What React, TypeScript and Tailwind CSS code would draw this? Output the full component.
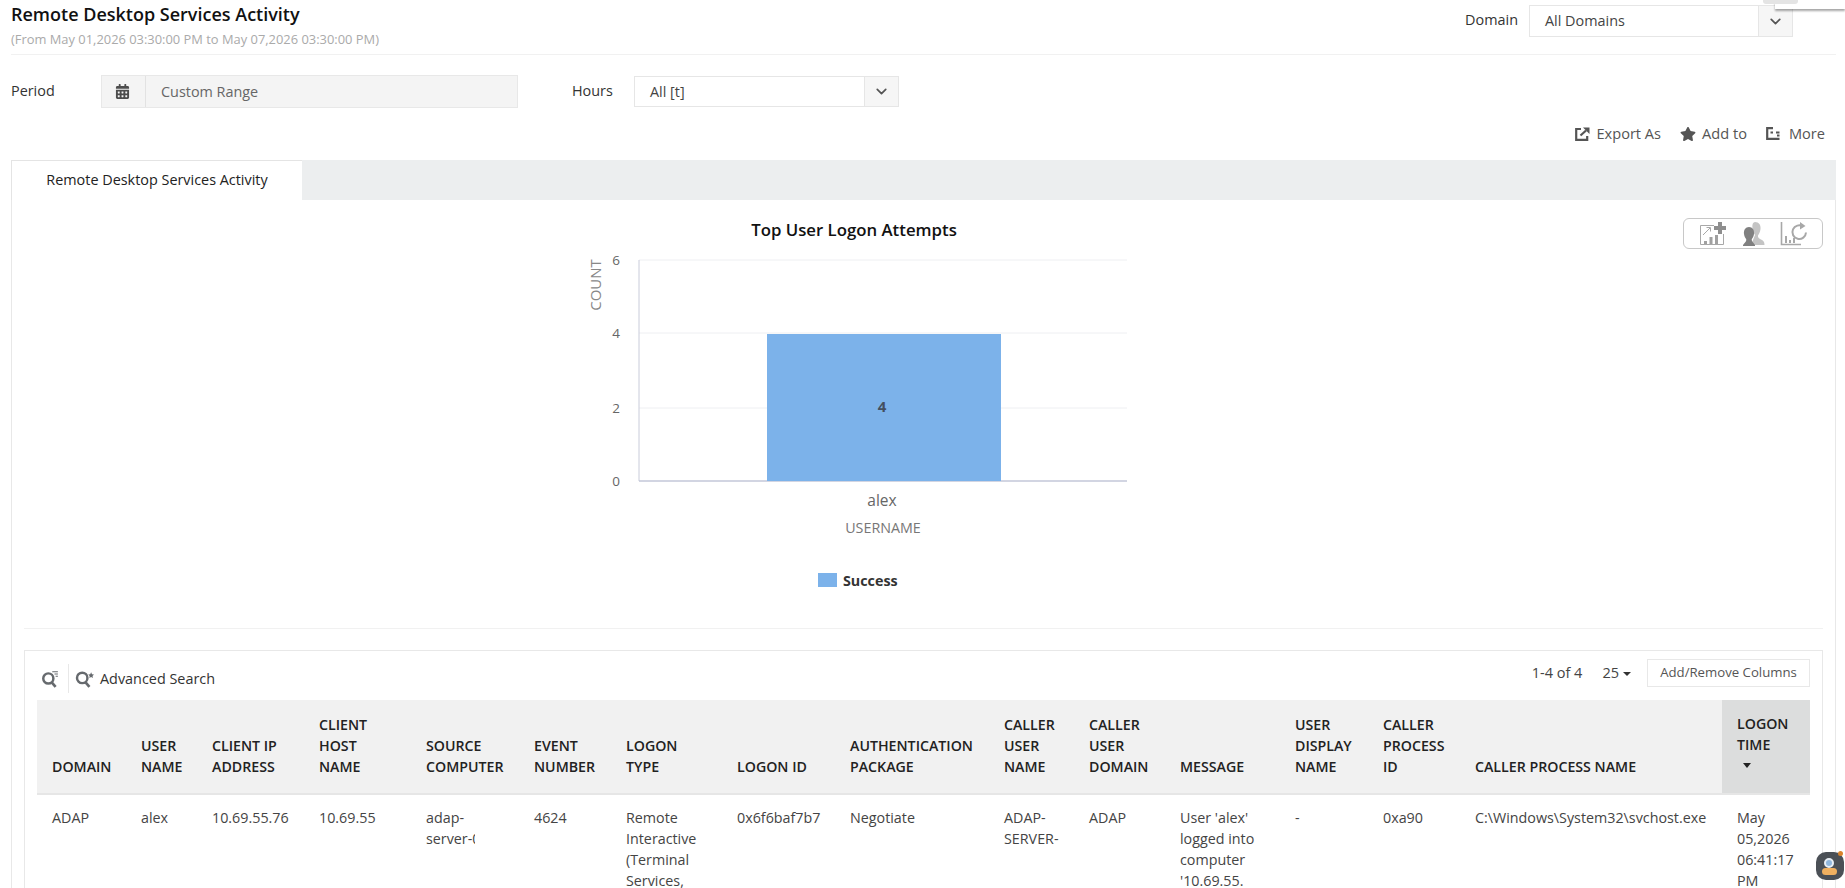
import React from 'react';
import { ChevronDown } from 'lucide-react';
import { FaCalendarAlt, FaStar } from 'react-icons/fa';

const columns = [
  { w: 'w-[89px]', head: ['DOMAIN'], cell: ['ADAP'] },
  { w: 'w-[71px]', head: ['USER', 'NAME'], cell: ['alex'] },
  { w: 'w-[107px]', head: ['CLIENT IP', 'ADDRESS'], cell: ['10.69.55.76'] },
  { w: 'w-[107px]', head: ['CLIENT', 'HOST', 'NAME'], cell: ['10.69.55'] },
  { w: 'w-[108px]', head: ['SOURCE', 'COMPUTER'], cell: ['adap-', 'server-0'], clip: true },
  { w: 'w-[92px]', head: ['EVENT', 'NUMBER'], cell: ['4624'] },
  { w: 'w-[111px]', head: ['LOGON', 'TYPE'], cell: ['Remote', 'Interactive', '(Terminal', 'Services,'] },
  { w: 'w-[113px]', head: ['LOGON ID'], cell: ['0x6f6baf7b7'] },
  { w: 'w-[154px]', head: ['AUTHENTICATION', 'PACKAGE'], cell: ['Negotiate'] },
  { w: 'w-[85px]', head: ['CALLER', 'USER', 'NAME'], cell: ['ADAP-', 'SERVER-'] },
  { w: 'w-[91px]', head: ['CALLER', 'USER', 'DOMAIN'], cell: ['ADAP'] },
  { w: 'w-[115px]', head: ['MESSAGE'], cell: ["User 'alex'", 'logged into', 'computer', "'10.69.55."] },
  { w: 'w-[88px]', head: ['USER', 'DISPLAY', 'NAME'], cell: ['-'] },
  { w: 'w-[92px]', head: ['CALLER', 'PROCESS', 'ID'], cell: ['0xa90'] },
  { w: 'w-[262px]', head: ['CALLER PROCESS NAME'], cell: ['C:\\Windows\\System32\\svchost.exe'] },
];

const ExportIcon = () => (
  <svg width="15" height="14" viewBox="0 0 15 14" fill="none">
    <path d="M6 2H1.200v10.800h11V9" stroke="#555" strokeWidth="2.200" />
    <path d="M5.500 8.500 11 3.500" stroke="#555" strokeWidth="2.200" />
    <path d="M8 0.500h6.500V7z" fill="#555" />
  </svg>
);

const MoreIcon = () => (
  <svg width="14" height="13" viewBox="0 0 14 13" fill="none" stroke="#555" strokeWidth="2.200">
    <path d="M7 1.200H1.200V11.800H13.500" />
    <path d="M4.500 5.500h2.500M10 5.500h3.500M11 8.500h2.500" />
  </svg>
);

const SearchFilterIcon = () => (
  <svg width="18" height="18" viewBox="0 0 16 16" fill="none" stroke="#666a6e">
    <circle cx="6.500" cy="7.500" r="4.500" strokeWidth="2.200" />
    <path d="m9.500 11 3.500 4" strokeWidth="2.400" />
    <path d="M10 1.500h5M12 3.500h3M13 5.500h2" strokeWidth="1" />
  </svg>
);

const SearchStarIcon = () => (
  <svg width="20" height="18" viewBox="0 0 18 16">
    <g fill="none" stroke="#666a6e">
      <circle cx="6.500" cy="7" r="4.700" strokeWidth="2.200" />
      <path d="m9.500 11 3.500 4" strokeWidth="2.400" />
    </g>
    <path d="m14.500 2 .8 1.700 1.800.2-1.300 1.300.3 1.800-1.600-.9-1.600.9.3-1.800-1.300-1.300 1.800-.2z" fill="#666a6e" />
  </svg>
);

const ChartAddIcon = () => (
  <svg width="27" height="24" viewBox="0 0 27 24" fill="none" className="shrink-0">
    <path d="M15 3.500H1.500v19h23V12" stroke="#a8a8a8" />
    <path d="m4 13 7-7M7.500 5.500H11.500V9.500" stroke="#a8a8a8" />
    <path d="M5 19h3v3H5zM10.500 15h3v7h-3zM16 13h3v9h-3z" fill="#a0a0a0" />
    <path d="M19 0h4v4h4v4h-4v4h-4V8h-4V4h4z" fill="#8e8e8e" />
  </svg>
);

const UsersIcon = () => (
  <svg width="24" height="24" viewBox="0 0 24 24" className="shrink-0">
    <path d="M14 0c4 0 6 3 5.500 7-.3 3-1.500 5-2.500 6.500-.5 2 1 3 4 4.500 1.500.7 2.500 2 2.500 5H10l4-10C11 9 10 0 14 0z" fill="#c4c4c4" />
    <path d="M8 5c3.500 0 5.500 3 5 7-.3 2.500-1.500 4-2.300 5.500 0 1.500 1.500 3 3.300 5.500v1H2v-1c2-2.500 3.500-4 3.300-5.500C4.500 16 3.300 14.500 3 12c-.5-4 1.500-7 5-7z" fill="#808080" />
  </svg>
);

const ChartRefreshIcon = () => (
  <svg width="28" height="24" viewBox="0 0 28 24" fill="none" className="shrink-0">
    <path d="M1.500 0v22.500H21" stroke="#a8a8a8" strokeWidth="1.600" />
    <path d="M5 14h2v7H5zM9 18h2v3H9zM13 16h2v5h-2z" fill="#a8a8a8" />
    <path d="M23 4.500a6.800 6.800 0 1 0 3 6" stroke="#a8a8a8" strokeWidth="2" />
    <path d="M20 0l5.500 4-5.500 3.500z" fill="#a8a8a8" />
  </svg>
);

const SelectBox = ({ label, width, height }: { label: string; width: string; height: string }) => (
  <div className={`flex ${width} ${height} border border-[#e6e6e6] bg-white`}>
    <div className="flex flex-1 items-center pl-[15px] text-[14.400px] text-[#444]">{label}</div>
    <div className="flex w-[34px] items-center justify-center border-l border-[#e6e6e6] bg-[#f6f6f6]">
      <ChevronDown size={17} strokeWidth={2.4} color="#555" />
    </div>
  </div>
);

const Chart = () => (
  <svg width="570" height="405" viewBox="0 0 570 405" className="shrink-0" fontFamily="'Open Sans', sans-serif">
    <text x="286" y="19" textAnchor="middle" fontSize="16.800" fontWeight="600" fill="#111">Top User Logon Attempts</text>
    {[43, 116, 191].map((y) => (
      <line key={y} x1="71" x2="559" y1={y} y2={y} stroke="#eeeff2" />
    ))}
    <line x1="71" x2="71" y1="43" y2="264" stroke="#c9ccda" />
    <line x1="71" x2="559" y1="264" y2="264" stroke="#c3c7d8" strokeWidth="1.500" />
    {[['6', 48], ['4', 121], ['2', 196], ['0', 269]].map(([t, y]) => (
      <text key={t} x="48" y={y} textAnchor="middle" fontSize="13.500" fill="#666">{t}</text>
    ))}
    <text transform="translate(33 68) rotate(-90)" textAnchor="middle" fontSize="15" fill="#888">COUNT</text>
    <rect x="199" y="117" width="234" height="147" fill="#7cb2ea" />
    <text x="314" y="195" textAnchor="middle" fontSize="15" fontWeight="700" fill="#444f60">4</text>
    <text x="314" y="289" textAnchor="middle" fontSize="15.500" fill="#666">alex</text>
    <text x="315" y="316" textAnchor="middle" fontSize="14.300" fill="#777">USERNAME</text>
    <rect x="250" y="356" width="19" height="14" fill="#7cb2ea" />
    <text x="275" y="369" fontSize="14.300" fontWeight="700" fill="#333">Success</text>
  </svg>
);

const App: React.FC = () => {
  return (
    <div className="relative h-[888px] overflow-hidden bg-white font-['Open_Sans',sans-serif] text-[#333]">
      {/* Top bar */}
      <div className="mr-[9px] ml-[11px] flex h-[55px] justify-between border-b border-[#f1f1f1]">
        <div>
          <h1 className="mt-[2px] text-[18px] leading-[24px] font-semibold text-[#111]">Remote Desktop Services Activity</h1>
          <p className="mt-[3px] text-[12.900px] leading-[20px] text-[#aaa]">(From May 01,2026 03:30:00 PM to May 07,2026 03:30:00 PM)</p>
        </div>
        <div className="mt-[5px] mr-[43px] flex items-start">
          <span className="mt-[4px] mr-[11px] text-[14.400px] text-[#333]">Domain</span>
          <SelectBox label="All Domains" width="w-[264px]" height="h-[32px]" />
        </div>
      </div>

      {/* Filters */}
      <div className="mt-[20px] flex items-center pl-[11px] text-[14.400px]">
        <span className="w-[90px] pb-[2px]">Period</span>
        <div className="flex h-[33px] w-[417px] border border-[#e8e8e8] bg-[#f4f4f4]">
          <div className="flex w-[44px] items-center justify-center border-r border-[#e2e2e2] pr-[2px]">
            <FaCalendarAlt size={15} color="#4d4d4d" />
          </div>
          <div className="flex items-center pl-[15px] text-[#666]">Custom Range</div>
        </div>
        <span className="ml-[54px] w-[62px] pb-[2px]">Hours</span>
        <SelectBox label="All [t]" width="w-[265px]" height="h-[31px]" />
      </div>

      {/* Actions */}
      <div className="mt-[15px] flex h-[22px] items-center justify-end gap-[19px] pr-[20px] text-[14.600px] text-[#555]">
        <div className="flex items-center gap-[6px]"><ExportIcon />Export As</div>
        <div className="flex items-center gap-[6px]"><FaStar size={16} color="#555" />Add to</div>
        <div className="flex items-center gap-[9px]"><MoreIcon />More</div>
      </div>

      {/* Tabs */}
      <div className="mt-[15px] mr-[9px] ml-[11px] flex h-[40px] bg-[#eceeef]">
        <div className="flex w-[291px] items-center justify-center border-t border-l border-[#e4e4e4] bg-white pb-[2px] text-[14.400px] text-[#222]">
          Remote Desktop Services Activity
        </div>
      </div>

      {/* Panel */}
      <div className="mr-[9px] ml-[11px] h-[700px] border-x border-[#e8e8e8] px-[12px]">
        <div className="flex items-start border-b border-[#f1f1f1] pt-[17px] pb-[6px]">
          <div className="ml-[544px]"><Chart /></div>
          <div className="mt-[1px] ml-auto flex h-[31px] w-[140px] items-center justify-center gap-[15px] rounded-[6px] border border-[#c8c8c8]">
            <ChartAddIcon />
            <UsersIcon />
            <ChartRefreshIcon />
          </div>
        </div>

        <div className="mt-[21px] border border-[#e8e8e8] px-[12px]">
          <div className="flex h-[49px] items-start">
            <div className="mt-[13px] flex h-[29px] w-[32px] items-center border-r border-[#e8e8e8] pl-[4px]"><SearchFilterIcon /></div>
            <div className="mt-[13px] ml-[6px] flex h-[29px] items-center gap-[5px] text-[14.400px] text-[#333]"><SearchStarIcon />Advanced Search</div>
            <div className="mt-[8px] ml-auto flex items-center text-[14.500px]">
              <span className="text-[#444]">1-4 of 4</span>
              <span className="ml-[20px] flex items-center gap-[4px] text-[#444]">25<span className="mt-[2px] border-x-[4px] border-t-[4px] border-x-transparent border-t-[#333]" /></span>
              <span className="ml-[16px] flex h-[28px] w-[163px] items-center justify-center border border-[#e8e8e8] text-[13.200px] text-[#555]">Add/Remove Columns</span>
            </div>
          </div>
          <table className="w-[1773px] table-fixed border-collapse text-[14.300px] leading-[21px]">
            <colgroup>
              {columns.map((c) => <col key={c.head.join()} className={c.w} />)}
              <col className="w-[88px]" />
            </colgroup>
            <thead>
              <tr className="h-[94px] border-b-[2px] border-[#e6e6e6] bg-[#f1f1f1] text-left align-bottom text-[14.200px] font-semibold text-[#222]">
                {columns.map((c) => (
                  <th key={c.head.join()} className="px-[15px] pb-[16px] font-semibold">
                    {c.head.map((h) => <div key={h} className="whitespace-nowrap">{h}</div>)}
                  </th>
                ))}
                <th className="bg-[#dcdddd] px-[15px] pb-[17px] align-bottom font-semibold">
                  <div>LOGON</div>
                  <div>TIME</div>
                  <div className="flex h-[21px] items-center pl-[6px]">
                    <span className="h-0 w-0 border-x-[4.500px] border-t-[5px] border-x-transparent border-t-[#222]" />
                  </div>
                </th>
              </tr>
            </thead>
            <tbody>
              <tr className="align-top text-[#444]">
                {columns.map((c) => (
                  <td key={c.head.join()} className="px-[15px] pt-[12px]">
                    <div className={c.clip ? 'w-[49px] overflow-hidden' : ''}>
                      {c.cell.map((t) => <div key={t} className="whitespace-nowrap">{t}</div>)}
                    </div>
                  </td>
                ))}
                <td className="px-[15px] pt-[12px]">
                  <div>May</div>
                  <div>05,2026</div>
                  <div>06:41:17</div>
                  <div>PM</div>
                </td>
              </tr>
            </tbody>
          </table>
        </div>
      </div>

      {/* Floating assistant */}
      <div className="absolute top-[852px] left-[1816px] h-[28px] w-[28px] rounded-[10px] bg-[#4b5056]">
        <span className="absolute top-[6px] left-[8px] h-[10px] w-[10px] rounded-full border-[2px] border-[#e8eef4] bg-[#8fb6dc]" />
        <span className="absolute top-[16px] left-[6px] h-[7px] w-[15px] rounded-[4px] bg-[#f0b060]" />
      </div>
      <span className="absolute top-[851px] left-[1838px] h-[5px] w-[5px] rounded-full bg-[#d9822b]" />

      {/* Clipped menu shadow at the top right */}
      <div className="absolute top-0 left-[1775px] h-[9px] w-[70px] bg-white shadow-[0_2px_2px_rgba(0,0,0,0.35)]" />
      <div className="absolute top-0 left-[1763px] h-[4px] w-[35px] rounded-b-[3px] bg-[#e4e4e4]" />
    </div>
  );
};

export default App;
